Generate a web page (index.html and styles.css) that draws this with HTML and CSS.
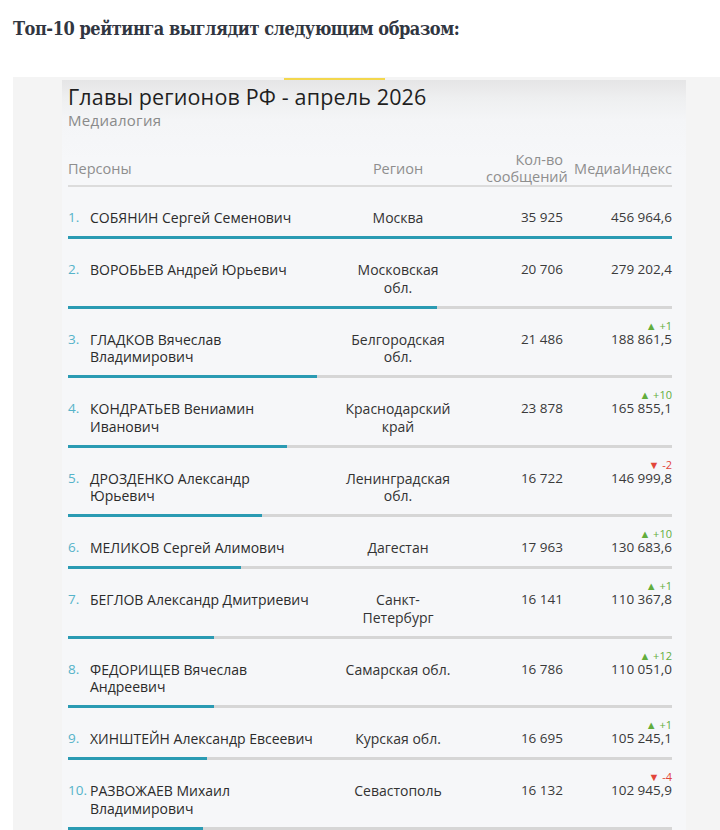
FILE: index.html
```html
<!DOCTYPE html>
<html lang="ru">
<head>
<meta charset="utf-8">
<title>Топ-10 рейтинга</title>
<link rel="stylesheet" href="styles.css">
</head>
<body>
<h2 class="lead">Топ-10 рейтинга выглядит следующим образом:</h2>
<div class="figure">
  <div class="accent"></div>
  <div class="card">
    <div class="title">Главы регионов РФ - апрель 2026</div>
    <div class="subtitle">Медиалогия</div>
    <div class="head">
      <div class="h-person">Персоны</div>
      <div class="h-region">Регион</div>
      <div class="h-count">Кол-во<br>сообщений</div>
      <div class="h-index">МедиаИндекс</div>
    </div>

    <div class="row">
      <div class="num">1.</div>
      <div class="name">СОБЯНИН Сергей Семенович</div>
      <div class="region">Москва</div>
      <div class="count">35 925</div>
      <div class="index">456 964,6</div>
    </div>
    <div class="bar"><div class="fill" style="width:100%"></div></div>

    <div class="row">
      <div class="num">2.</div>
      <div class="name">ВОРОБЬЕВ Андрей Юрьевич</div>
      <div class="region">Московская<br>обл.</div>
      <div class="count">20 706</div>
      <div class="index">279 202,4</div>
    </div>
    <div class="bar"><div class="fill" style="width:61.1%"></div></div>

    <div class="row">
      <div class="num">3.</div>
      <div class="name">ГЛАДКОВ Вячеслав<br>Владимирович</div>
      <div class="region">Белгородская<br>обл.</div>
      <div class="count">21 486</div>
      <div class="index"><div class="delta up">▲ +1</div>188 861,5</div>
    </div>
    <div class="bar"><div class="fill" style="width:41.3%"></div></div>

    <div class="row">
      <div class="num">4.</div>
      <div class="name">КОНДРАТЬЕВ Вениамин<br>Иванович</div>
      <div class="region">Краснодарский<br>край</div>
      <div class="count">23 878</div>
      <div class="index"><div class="delta up">▲ +10</div>165 855,1</div>
    </div>
    <div class="bar"><div class="fill" style="width:36.3%"></div></div>

    <div class="row">
      <div class="num">5.</div>
      <div class="name">ДРОЗДЕНКО Александр<br>Юрьевич</div>
      <div class="region">Ленинградская<br>обл.</div>
      <div class="count">16 722</div>
      <div class="index"><div class="delta down">▼ -2</div>146 999,8</div>
    </div>
    <div class="bar"><div class="fill" style="width:32.2%"></div></div>

    <div class="row">
      <div class="num">6.</div>
      <div class="name">МЕЛИКОВ Сергей Алимович</div>
      <div class="region">Дагестан</div>
      <div class="count">17 963</div>
      <div class="index"><div class="delta up">▲ +10</div>130 683,6</div>
    </div>
    <div class="bar"><div class="fill" style="width:28.6%"></div></div>

    <div class="row">
      <div class="num">7.</div>
      <div class="name">БЕГЛОВ Александр Дмитриевич</div>
      <div class="region">Санкт-<br>Петербург</div>
      <div class="count">16 141</div>
      <div class="index"><div class="delta up">▲ +1</div>110 367,8</div>
    </div>
    <div class="bar"><div class="fill" style="width:24.2%"></div></div>

    <div class="row">
      <div class="num">8.</div>
      <div class="name">ФЕДОРИЩЕВ Вячеслав<br>Андреевич</div>
      <div class="region">Самарская обл.</div>
      <div class="count">16 786</div>
      <div class="index"><div class="delta up">▲ +12</div>110 051,0</div>
    </div>
    <div class="bar"><div class="fill" style="width:24.1%"></div></div>

    <div class="row">
      <div class="num">9.</div>
      <div class="name">ХИНШТЕЙН Александр Евсеевич</div>
      <div class="region">Курская обл.</div>
      <div class="count">16 695</div>
      <div class="index"><div class="delta up">▲ +1</div>105 245,1</div>
    </div>
    <div class="bar"><div class="fill" style="width:23%"></div></div>

    <div class="row">
      <div class="num">10.</div>
      <div class="name">РАЗВОЖАЕВ Михаил<br>Владимирович</div>
      <div class="region">Севастополь</div>
      <div class="count">16 132</div>
      <div class="index"><div class="delta down">▼ -4</div>102 945,9</div>
    </div>
    <div class="bar"><div class="fill" style="width:22.4%"></div></div>
  </div>
</div>
</body>
</html>
```
FILE: styles.css
```css
html, body {
  margin: 0;
  padding: 0;
  background: #ffffff;
  overflow: hidden;
}

body {
  width: 720px;
  height: 830px;
}

.lead {
  margin: 0;
  padding: 17px 0 0 13px;
  height: 77px;
  box-sizing: border-box;
  font-family: "DejaVu Serif", "Liberation Serif", serif;
  font-stretch: condensed;
  font-weight: bold;
  font-size: 18px;
  letter-spacing: -0.45px;
  line-height: 24px;
  color: #313641;
}

.figure {
  margin-left: 13px;
  width: 707px;
  height: 753px;
  overflow: hidden;
  background: #f4f4f4;
  padding-left: 49px;
  box-sizing: border-box;
}

.accent {
  margin-left: 222px;
  width: 101px;
  height: 2px;
  background: #f3d74e;
  border-top: 1px solid #f4f4f4;
}

.card {
  width: 624px;
  height: 760px;
  padding: 4px 14px 0 6px;
  box-sizing: border-box;
  background: linear-gradient(#e5e5e6 0px, #eeeff0 18px, #f4f5f7 40px, #f6f7f9 80px);
  font-family: "Open Sans", "Noto Sans", sans-serif;
  color: #333;
}

.title {
  font-size: 21.5px;
  line-height: 26px;
  color: #1f1f1f;
  letter-spacing: 0.15px;
}

.subtitle {
  font-size: 15px;
  letter-spacing: 0.3px;
  line-height: 18px;
  color: #8a8a8a;
  margin-top: 1px;
}

.head,
.row {
  display: grid;
  grid-template-columns: 22px 220px 176px 77px 109px;
  align-items: center;
}

.head {
  margin-top: 22px;
  font-size: 14.5px;
  line-height: 17px;
  color: #8e8e8e;
  border-bottom: 2px solid #dcdcdc;
  padding-bottom: 0;
}

.h-person {
  grid-column: 1 / 3;
}

.h-region {
  text-align: center;
}

.h-count,
.h-index {
  text-align: right;
}

.row {
  padding: 22px 0 9.5px;
  font-size: 14px;
  line-height: 17.5px;
  align-items: start;
}

.num {
  color: #55b3c9;
  font-size: 13.5px;
}

.name {
  color: #2b2b2b;
  white-space: nowrap;
}

.region {
  text-align: center;
  color: #333;
  white-space: nowrap;
}

.count,
.index {
  text-align: right;
  color: #3a3a3a;
  font-size: 13.5px;
}

.delta {
  font-size: 11px;
  line-height: 12px;
  margin-top: -11px;
  margin-bottom: -1px;
}

.delta.up {
  color: #62ad3c;
}

.delta.down {
  color: #e2453a;
}

.bar {
  height: 3px;
  background: #d6d6d6;
}

.fill {
  height: 100%;
  background: #2b9bb3;
}
```
